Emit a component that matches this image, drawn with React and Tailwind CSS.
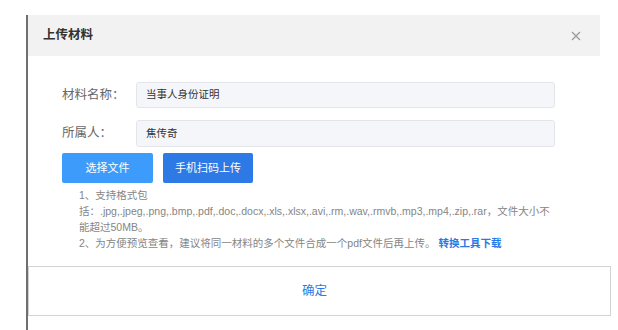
import React from 'react';

const notes = [
  '1、支持格式包',
  '括：.jpg,.jpeg,.png,.bmp,.pdf,.doc,.docx,.xls,.xlsx,.avi,.rm,.wav,.rmvb,.mp3,.mp4,.zip,.rar，文件大小不',
  '能超过50MB。',
];

function Field({ label, value, className }) {
  return (
    <div className={`flex items-center ${className}`}>
      <span className="w-[74px] text-[12.5px] text-[#666]">{label}</span>
      <div className="w-[419px] h-full flex items-center pl-[9px] bg-[#f5f6fa] border border-[#e3e5eb] rounded-[3px] text-[10.5px] text-[#333]">
        {value}
      </div>
    </div>
  );
}

export default function App() {
  return (
    <div className="w-[618px] h-[330px] bg-white pl-[26px] pt-[15px] overflow-hidden font-['Liberation_Sans','Noto_Sans_CJK_SC',sans-serif]">
      <div className="h-full border-l-2 border-[#6f6f6f] flex flex-col">
        {/* Header */}
        <div className="w-[572px] h-[41px] shrink-0 bg-[#f2f2f2] flex items-center justify-between pl-[15px] pr-[19px]">
          <h3 className="text-[12.5px] font-bold text-[#333]">上传材料</h3>
          <svg width="10" height="10" viewBox="0 0 10 10" className="text-[#9a9a9a]">
            <path d="M1 1L9 9M9 1L1 9" stroke="currentColor" strokeWidth="1.3" />
          </svg>
        </div>

        {/* Body */}
        <div className="pl-[34px] pt-[26px]">
          <Field label="材料名称：" value="当事人身份证明" className="h-[26px]" />
          <Field label="所属人：" value="焦传奇" className="h-[27px] mt-[12px]" />

          <div className="flex gap-[10px] mt-[6px]">
            <button className="w-[91px] h-[30px] bg-[#3d9cfb] text-white text-[11px] rounded-[2px]">选择文件</button>
            <button className="w-[90px] h-[30px] bg-[#2d79e5] text-white text-[11px] rounded-[2px]">手机扫码上传</button>
          </div>

          <div className="pl-[17px] mt-[4px] text-[10.5px] leading-[16px] text-[#858585] whitespace-nowrap">
            {notes.map(line => (
              <div key={line}>{line}</div>
            ))}
            <div>
              2、为方便预览查看，建议将同一材料的多个文件合成一个pdf文件后再上传。
              <span className="ml-[3px] text-[#2a79e3] font-bold">转换工具下载</span>
            </div>
          </div>
        </div>

        {/* Footer */}
        <div className="mt-auto mb-[14px] w-[583px] h-[50px] shrink-0 border border-[#d3d3d3] flex items-center justify-center pr-[10px]">
          <span className="text-[12.5px] text-[#2d79e5]">确定</span>
        </div>
      </div>
    </div>
  );
}
